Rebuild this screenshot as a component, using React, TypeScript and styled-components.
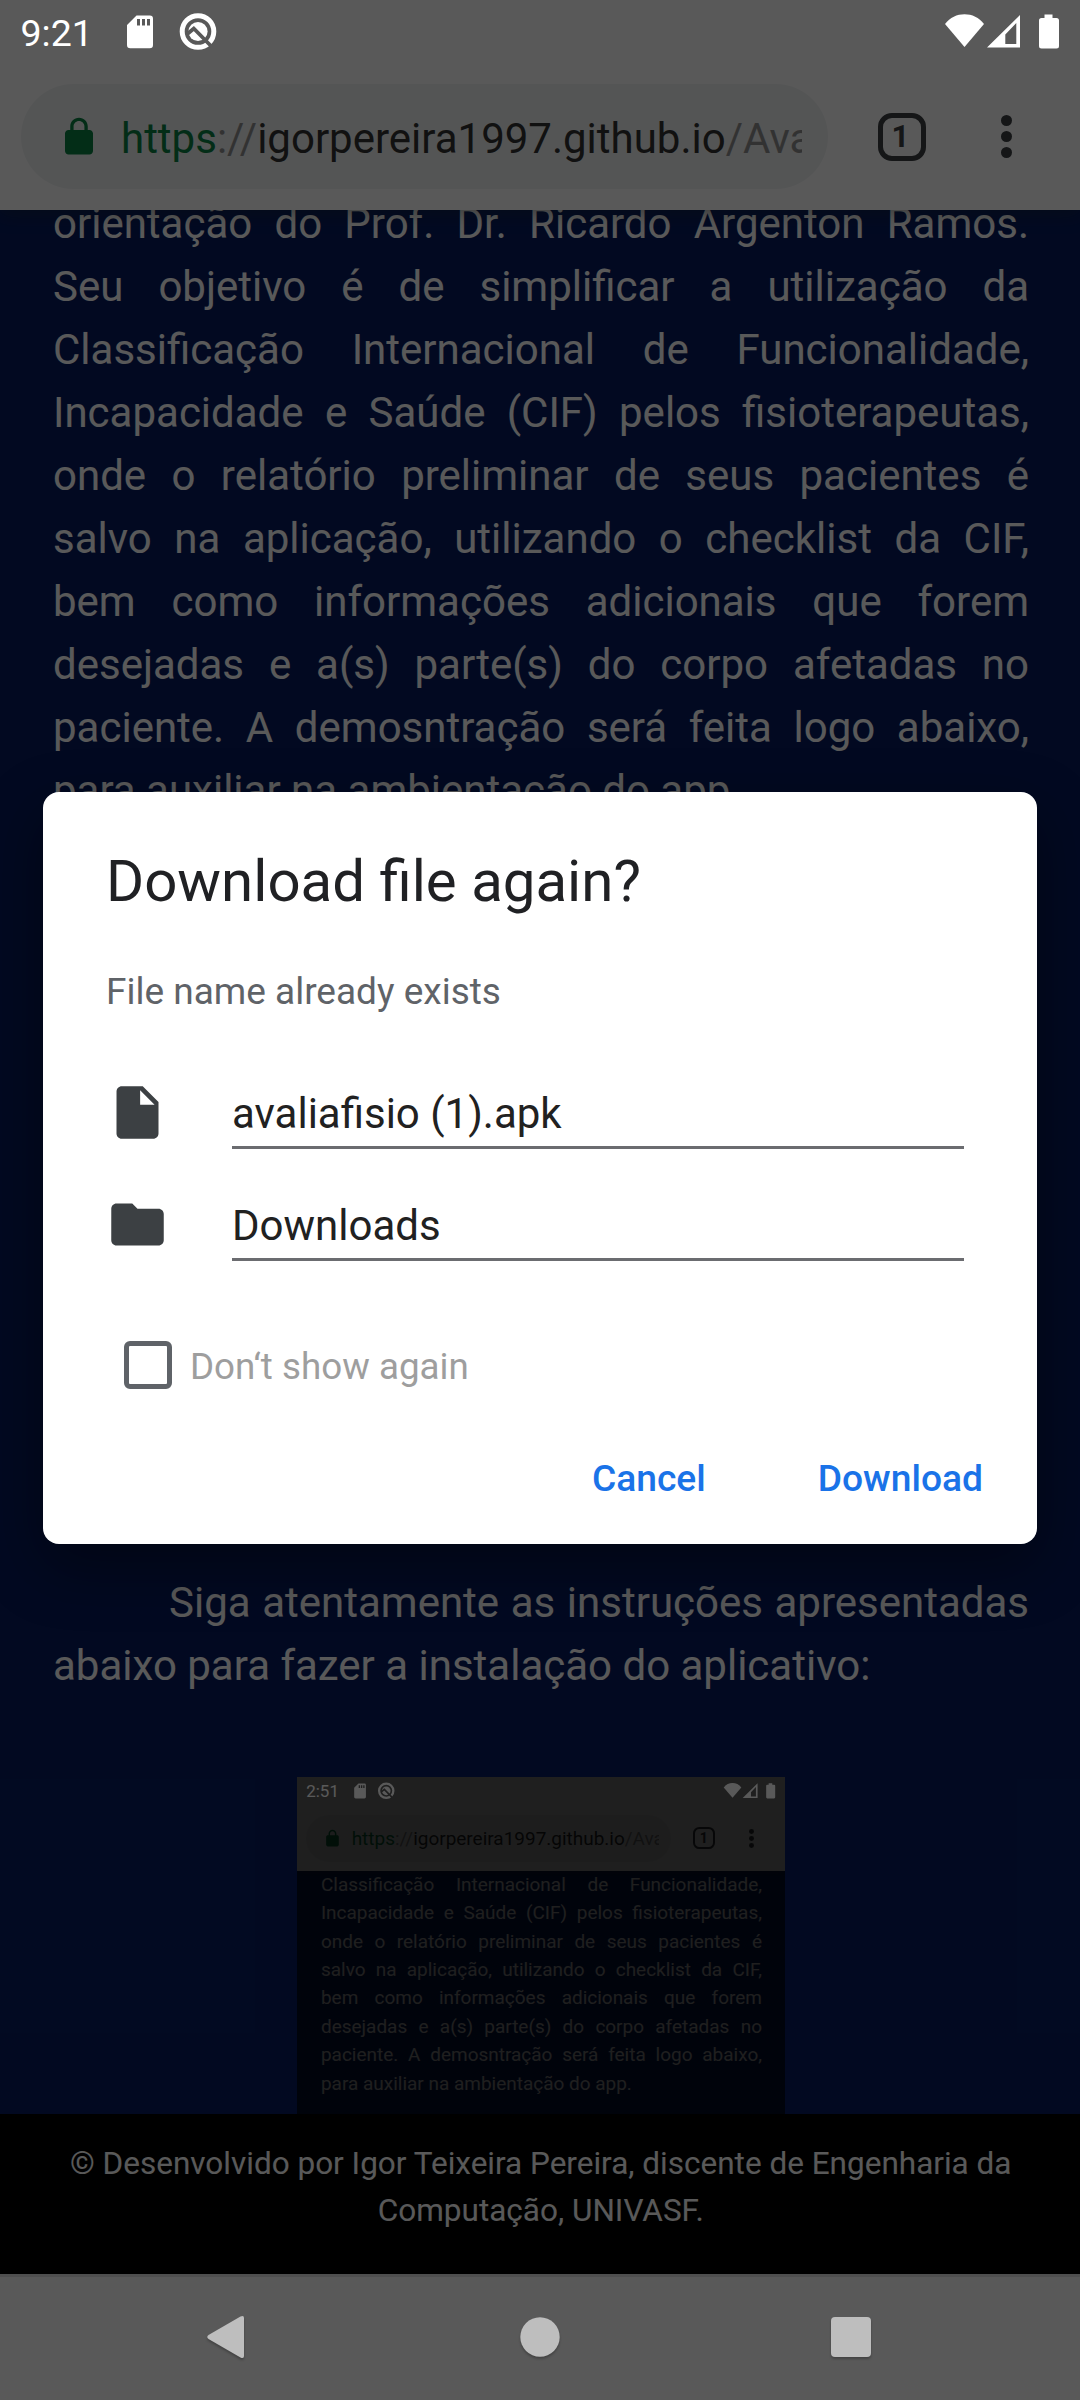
import React from "react";
import styled, { createGlobalStyle } from "styled-components";

const GlobalStyle = createGlobalStyle`
  * { box-sizing: border-box; }
  body { margin: 0; background: #061c60; }
`;

const Screen = styled.div`
  position: relative;
  width: 1080px;
  height: 2400px;
  overflow: hidden;
  display: flex;
  flex-direction: column;
  background: #061c60;
  font-family: Roboto, "Noto Sans", sans-serif;
  font-size: 42px;
`;

const TopChrome = styled.div`
  position: relative;
  flex: none;
  height: 210px;
  background: #ffffff;
  display: flex;
  flex-direction: column;
  justify-content: flex-end;
  padding: 0 0 21px 21px;
  z-index: 1;
  box-shadow: 0 2px 18px rgba(30, 40, 30, 0.45);
`;

const Toolbar = styled.div`
  display: flex;
  align-items: center;
  height: 105px;
`;

const UrlPill = styled.div`
  display: flex;
  align-items: center;
  flex: none;
  width: 807px;
  height: 105px;
  padding: 0 26px 0 36.5px;
  border-radius: 53px;
  background: #f1f3f4;
`;

const LockIcon = styled.svg`
  flex: none;
  width: 42px;
  height: 42px;
  fill: #0b8043;
`;

const UrlText = styled.div`
  flex: 1;
  margin-left: 21.5px;
  overflow: hidden;
  white-space: nowrap;
  line-height: 64px;
  padding-top: 4px;
  color: #333333;
`;

const UrlPart = styled.span<{ $tone: "secure" | "muted" }>`
  color: ${(p) => (p.$tone === "secure" ? "#0b8043" : "#919191")};
`;

const TabSwitcher = styled.div`
  flex: none;
  display: flex;
  align-items: center;
  justify-content: center;
  width: 48px;
  height: 48px;
  margin-left: 49.5px;
  padding-right: 2px;
  border: 5.5px solid #3c4043;
  border-radius: 14px;
  color: #3c4043;
  font-size: 31px;
  font-weight: 700;
  line-height: 36px;
`;

const MenuDots = styled.div`
  display: flex;
  flex-direction: column;
  gap: 5px;
  margin-left: 75px;
`;

const Dot = styled.i`
  width: 11px;
  height: 11px;
  border-radius: 50%;
  background: #3c4043;
`;

const Content = styled.main`
  flex: 1;
  min-height: 0;
  overflow: hidden;
  padding: 0 51px 0 53px;
  color: #ffffff;
  line-height: 63px;
`;

const Paragraph = styled.div<{ $offset: number }>`
  margin-top: ${(p) => p.$offset}px;
`;

const Line = styled.div<{ $indent?: number; $end?: boolean }>`
  text-align: justify;
  text-align-last: ${(p) => (p.$end ? "left" : "justify")};
  text-indent: ${(p) => p.$indent ?? 0}px;
  white-space: nowrap;
`;

const Thumbnail = styled.div`
  width: 488px;
  height: 340px;
  margin: 80px auto 0;
  overflow: hidden;
`;

const ThumbnailScale = styled.div`
  zoom: 0.45185;
`;

const Footer = styled.footer`
  flex: none;
  height: 160px;
  padding: 26px 0 0 1.5px;
  background: #000000;
  color: #ffffff;
  text-align: center;
  font-size: 31.5px;
  line-height: 47.25px;
`;

const NavSpace = styled.div`
  flex: none;
  height: 126px;
  border-top: 3px solid #e2e2e2;
  background: #ffffff;
`;

const Scrim = styled.div`
  position: absolute;
  inset: 0;
  z-index: 2;
  display: flex;
  flex-direction: column;
  background: rgba(0, 0, 0, 0.65);
`;

const StatusBar = styled.div`
  flex: none;
  height: 63px;
  display: flex;
  align-items: center;
  justify-content: space-between;
  padding: 0 21px 0 20px;
  color: #ffffff;
`;

const StatusGroup = styled.div`
  display: flex;
  align-items: center;
`;

const Clock = styled.span`
  width: 100px;
  padding: 3px 0 0 0.5px;
  font-size: 37.5px;
  line-height: 44px;
`;

const StatusSvg = styled.svg`
  display: block;
  fill: #ffffff;
`;

const DialogArea = styled.div`
  flex: 1;
  min-height: 0;
  padding: 729px 43px 0;
`;

const Dialog = styled.section`
  width: 994px;
  height: 752px;
  padding: 51px 54px 0 63px;
  border-radius: 16px;
  background: #ffffff;
  box-shadow: 0 22px 60px rgba(0, 0, 0, 0.4);
`;

const Title = styled.h1`
  margin: 0;
  font-size: 58.2px;
  font-weight: 400;
  line-height: 76px;
  color: #202124;
`;

const Subtitle = styled.p`
  margin: 49px 0 0;
  font-size: 37px;
  line-height: 48px;
  color: #5f6368;
`;

const Fields = styled.div`
  display: flex;
  flex-direction: column;
  margin-top: 45px;
`;

const FieldRow = styled.div`
  display: flex;
  height: 112px;
  padding-right: 19px;
`;

const FieldIcon = styled.svg`
  flex: none;
  width: 63px;
  height: 63px;
  margin-top: 20px;
  fill: #3c4043;
`;

const FieldText = styled.div`
  flex: 1;
  height: 88px;
  margin-left: 63px;
  padding-top: 25px;
  border-bottom: 3px solid #6b6c70;
  font-size: 42px;
  line-height: 56px;
  color: #212121;
`;

const CheckRow = styled.label`
  display: flex;
  align-items: center;
  height: 48px;
  margin-top: 56px;
  padding-left: 18px;
  font-size: 36.75px;
  color: #9e9e9e;
`;

const CheckBox = styled.span`
  width: 48px;
  height: 48px;
  margin-right: 18px;
  border: 5.5px solid #5f6368;
  border-radius: 6px;
`;

const CheckLabel = styled.span`
  padding-top: 2px;
`;

const Actions = styled.div`
  display: flex;
  justify-content: flex-end;
  gap: 112px;
  margin-top: 65px;
`;

const ActionButton = styled.button`
  padding: 0;
  border: 0;
  background: none;
  font-family: inherit;
  font-size: 37.2px;
  font-weight: 500;
  line-height: 48px;
  color: #1a73e8;
`;

const NavBar = styled.nav`
  flex: none;
  height: 126px;
  display: flex;
  align-items: center;
  justify-content: space-around;
  padding: 0 72px;
`;

const NavSvg = styled.svg`
  width: 52px;
  height: 56px;
  fill: #bebebe;
  filter: drop-shadow(0 2px 1px rgba(0, 0, 0, 0.25));
`;

const intro = [
  "orientação do Prof. Dr. Ricardo Argenton Ramos.",
  "Seu objetivo é de simplificar a utilização da",
  "Classificação Internacional de Funcionalidade,",
  "Incapacidade e Saúde (CIF) pelos fisioterapeutas,",
  "onde o relatório preliminar de seus pacientes é",
  "salvo na aplicação, utilizando o checklist da CIF,",
  "bem como informações adicionais que forem",
  "desejadas e a(s) parte(s) do corpo afetadas no",
  "paciente. A demosntração será feita logo abaixo,",
  "para auxiliar na ambientação do app.",
];

function IntroText({ from, offset }: { from: number; offset: number }) {
  const lines = intro.slice(from);
  return (
    <Paragraph $offset={offset}>
      {lines.map((text, i) => (
        <Line key={text} $end={i === lines.length - 1}>
          {text}
        </Line>
      ))}
    </Paragraph>
  );
}

function BrowserBar() {
  return (
    <TopChrome>
      <Toolbar>
        <UrlPill>
          <LockIcon viewBox="0 0 24 24">
            <path d="M18 8h-1V6c0-2.76-2.24-5-5-5S7 3.240 7 6v2H6c-1.100 0-2 .9-2 2v10c0 1.100.9 2 2 2h12c1.100 0 2-.9 2-2V10c0-1.100-.9-2-2-2zM8.900 8V6c0-1.710 1.390-3.100 3.100-3.100s3.100 1.390 3.100 3.100v2H8.900z" />
          </LockIcon>
          <UrlText>
            <UrlPart $tone="secure">https</UrlPart>
            <UrlPart $tone="muted">://</UrlPart>
            igorpereira1997.github.io
            <UrlPart $tone="muted">/Ava</UrlPart>
          </UrlText>
        </UrlPill>
        <TabSwitcher>1</TabSwitcher>
        <MenuDots>
          <Dot />
          <Dot />
          <Dot />
        </MenuDots>
      </Toolbar>
    </TopChrome>
  );
}

function Status({ time }: { time: string }) {
  return (
    <StatusBar>
      <StatusGroup>
        <Clock>{time}</Clock>
        <StatusSvg width="100" height="40" viewBox="0 0 100 40">
          <path
            fillRule="evenodd"
            d="M16.500 3.500H29.500A3.300 3.300 0 0 1 33 6.800V33A3.300 3.300 0 0 1 29.700 36.300H10.300A3.300 3.300 0 0 1 7 33V13ZM17 7V13.500H20V7ZM22 7V13.500H25V7ZM27 7V13.500H30V7Z"
          />
          <circle cx="78" cy="19.500" r="15.800" fill="none" stroke="#ffffff" strokeWidth="5" />
          <circle cx="78" cy="19.500" r="9.600" />
          <path
            fill="none"
            stroke="#595959"
            strokeWidth="3.800"
            d="M67.300 22L73.800 16.500L91.500 34.500"
          />
        </StatusSvg>
      </StatusGroup>
      <StatusSvg width="120" height="40" viewBox="0 0 120 40">
        <path d="M6 12C11 5.500 18 2.300 25.500 2.300S40 5.500 45 12L25.500 35Z" />
        <path fillRule="evenodd" d="M48 35.500L81 3V35.500ZM66.300 22.500V32H77.300V11Z" />
        <path d="M105.500 2.500H113.500V6H117.500Q120 6 120 8.500V34Q120 36.500 117.500 36.500H102.500Q100 36.500 100 34V8.500Q100 6 102.500 6H105.500Z" />
      </StatusSvg>
    </StatusBar>
  );
}

export default function App() {
  return (
    <>
      <GlobalStyle />
      <Screen>
        <BrowserBar />
        <Content>
          <IntroText from={0} offset={-18.4} />
          <Paragraph $offset={749}>
            <Line $indent={116}>Siga atentamente as instruções apresentadas</Line>
            <Line $end>abaixo para fazer a instalação do aplicativo:</Line>
          </Paragraph>
          <Thumbnail>
            <ThumbnailScale>
              <Screen>
                <BrowserBar />
                <Content>
                  <IntroText from={2} offset={-2} />
                </Content>
                <Scrim>
                  <Status time="2:51" />
                </Scrim>
              </Screen>
            </ThumbnailScale>
          </Thumbnail>
        </Content>
        <Footer>
          © Desenvolvido por Igor Teixeira Pereira, discente de Engenharia da
          <br />
          Computação, UNIVASF.
        </Footer>
        <NavSpace />
        <Scrim>
          <Status time="9:21" />
          <DialogArea>
            <Dialog>
              <Title>Download file again?</Title>
              <Subtitle>File name already exists</Subtitle>
              <Fields>
                <FieldRow>
                  <FieldIcon viewBox="0 0 24 24">
                    <path d="M6 2c-1.100 0-1.990.9-1.990 2L4 20c0 1.100.890 2 1.990 2H18c1.100 0 2-.9 2-2V8l-6-6H6zm7 7V3.500L18.500 9H13z" />
                  </FieldIcon>
                  <FieldText>avaliafisio (1).apk</FieldText>
                </FieldRow>
                <FieldRow>
                  <FieldIcon viewBox="0 0 24 24">
                    <path d="M10 4H4c-1.100 0-1.990.9-1.990 2L2 18c0 1.100.9 2 2 2h16c1.100 0 2-.9 2-2V8c0-1.100-.9-2-2-2h-8l-2-2z" />
                  </FieldIcon>
                  <FieldText>Downloads</FieldText>
                </FieldRow>
              </Fields>
              <CheckRow>
                <CheckBox />
                <CheckLabel>Don‘t show again</CheckLabel>
              </CheckRow>
              <Actions>
                <ActionButton>Cancel</ActionButton>
                <ActionButton>Download</ActionButton>
              </Actions>
            </Dialog>
          </DialogArea>
          <NavBar>
            <NavSvg viewBox="0 0 52 56">
              <path d="M6.500 26L38.500 7.500Q42 6 42 9V47Q42 50 38.500 48.500L6.500 30Q4 28 6.500 26Z" />
            </NavSvg>
            <NavSvg viewBox="0 0 52 56">
              <circle cx="26" cy="28" r="19.700" />
            </NavSvg>
            <NavSvg viewBox="0 0 52 56">
              <rect x="5" y="8" width="40" height="40" rx="4" />
            </NavSvg>
          </NavBar>
        </Scrim>
      </Screen>
    </>
  );
}
